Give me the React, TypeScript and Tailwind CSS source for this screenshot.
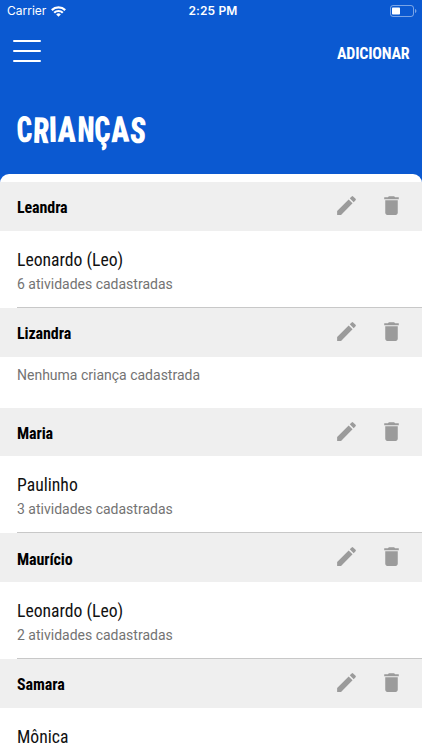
import { MdDelete, MdEdit } from 'react-icons/md'

type Child = { name: string; activities?: number }
type Guardian = { name: string; children: Child[] }

const guardians: Guardian[] = [
  { name: 'Leandra', children: [{ name: 'Leonardo (Leo)', activities: 6 }] },
  { name: 'Lizandra', children: [] },
  { name: 'Maria', children: [{ name: 'Paulinho', activities: 3 }] },
  { name: 'Maurício', children: [{ name: 'Leonardo (Leo)', activities: 2 }] },
  { name: 'Samara', children: [{ name: 'Mônica' }] },
]

// The title letters wobble a little, each with its own slot width
const titleLetters = [
  { char: 'C', slot: 'w-[16.5px]', style: 'scale-x-[.76] -rotate-2' },
  { char: 'R', slot: 'w-[16.5px]', style: 'scale-x-[.8] translate-y-px rotate-2' },
  { char: 'I', slot: 'w-[8px]', style: 'scale-x-[.82] -rotate-1' },
  { char: 'A', slot: 'w-[19px]', style: 'scale-x-[.84] rotate-1' },
  { char: 'N', slot: 'w-[18px]', style: 'scale-x-[.78] rotate-1' },
  { char: 'Ç', slot: 'w-[16px]', style: 'scale-x-[.78] -rotate-2' },
  { char: 'A', slot: 'w-[18.5px]', style: 'scale-x-[.84] -rotate-2' },
  { char: 'S', slot: 'w-[17px]', style: 'scale-x-[.82] translate-y-px rotate-3' },
]

function StatusBar() {
  return (
    <div className="grid h-[22px] grid-cols-3 items-center pl-[7px] pr-[5px] font-['Inter',sans-serif] text-[12px] leading-none">
      <div className="flex items-center gap-[5px]">
        <span className="text-[12px]">Carrier</span>
        <svg width="15" height="11" viewBox="0 0 15 11" fill="none" stroke="white" strokeWidth="2.2">
          <path d="M.8 4.1a9.5 9.5 0 0 1 13.4 0" />
          <path d="M3.2 6.8a6 6 0 0 1 8.6 0" />
          <path d="M7.5 10.8 5.2 8.5a3.2 3.2 0 0 1 4.6 0z" fill="white" stroke="none" />
        </svg>
      </div>
      <span className="pl-[2px] text-center font-semibold tracking-[0.15px]">2:25 PM</span>
      <svg className="justify-self-end" width="27" height="12" viewBox="0 0 27 12">
        <rect x="0.5" y="0.5" width="23" height="11" rx="2.5" fill="none" stroke="white" strokeOpacity="0.45" />
        <rect x="2" y="2.5" width="8" height="7" rx="0.8" fill="white" />
        <path d="M25 4v4c.9-.3 1.4-1 1.4-2S25.9 4.3 25 4z" fill="white" fillOpacity="0.45" />
      </svg>
    </div>
  )
}

function GuardianSection({ guardian }: { guardian: Guardian }) {
  return (
    <section>
      <div className="flex h-[48.75px] items-center justify-between bg-[#efefef] pl-[17px] pr-[18.5px]">
        <h2 className="pt-[4px] text-[16px] font-bold tracking-[-0.1px] text-black">{guardian.name}</h2>
        <div className="flex gap-[20px] pb-[1.5px] text-[#9b9b9b]">
          <button aria-label="Editar"><MdEdit size={25} /></button>
          <button aria-label="Excluir"><MdDelete size={25} /></button>
        </div>
      </div>

      {guardian.children.length === 0 && (
        <p className="h-[51px] pl-[17px] pt-[8px] font-['Roboto',sans-serif] text-[14px] leading-[20px] font-stretch-normal text-[#737373]">
          Nenhuma criança cadastrada
        </p>
      )}

      {guardian.children.map((child) => (
        <div key={child.name} className="ml-[17px] h-[77px] border-b border-[#c8c8c8] pt-[17px]">
          <p className="origin-left scale-x-[.93] text-[19px] leading-[24px] text-[#111]">{child.name}</p>
          {child.activities !== undefined && (
            <p className="font-['Roboto',sans-serif] text-[14px] leading-[24px] font-stretch-normal text-[#737373]">
              {child.activities} atividades cadastradas
            </p>
          )}
        </div>
      ))}
    </section>
  )
}

export default function App() {
  return (
    <div className="flex h-[750px] w-[422px] flex-col overflow-hidden bg-[#0b59d1] font-['Roboto_Condensed','Roboto',sans-serif] font-stretch-condensed">
      <header className="h-[174px] shrink-0 text-white">
        <StatusBar />
        <div className="flex h-[60px] items-center justify-between px-[12.5px]">
          <button aria-label="Menu" className="mb-[1.5px] flex w-[28.5px] flex-col gap-[8px]">
            <span className="h-[2px] rounded-full bg-white" />
            <span className="h-[2px] rounded-full bg-white" />
            <span className="h-[2px] rounded-full bg-white" />
          </button>
          <button className="pt-[3px] text-[16px] font-bold tracking-[-0.2px]">ADICIONAR</button>
        </div>
        <h1 className="mt-[28px] flex pl-[16.5px] text-[36px] leading-[40px] font-black">
          {titleLetters.map(({ char, slot, style }, i) => (
            <span key={i} className={`flex justify-center ${slot}`}>
              <span className={style}>{char}</span>
            </span>
          ))}
        </h1>
      </header>

      <main className="flex-1 overflow-hidden rounded-t-[9px] bg-white pt-[8px]">
        {guardians.map((guardian) => (
          <GuardianSection key={guardian.name} guardian={guardian} />
        ))}
      </main>
    </div>
  )
}
